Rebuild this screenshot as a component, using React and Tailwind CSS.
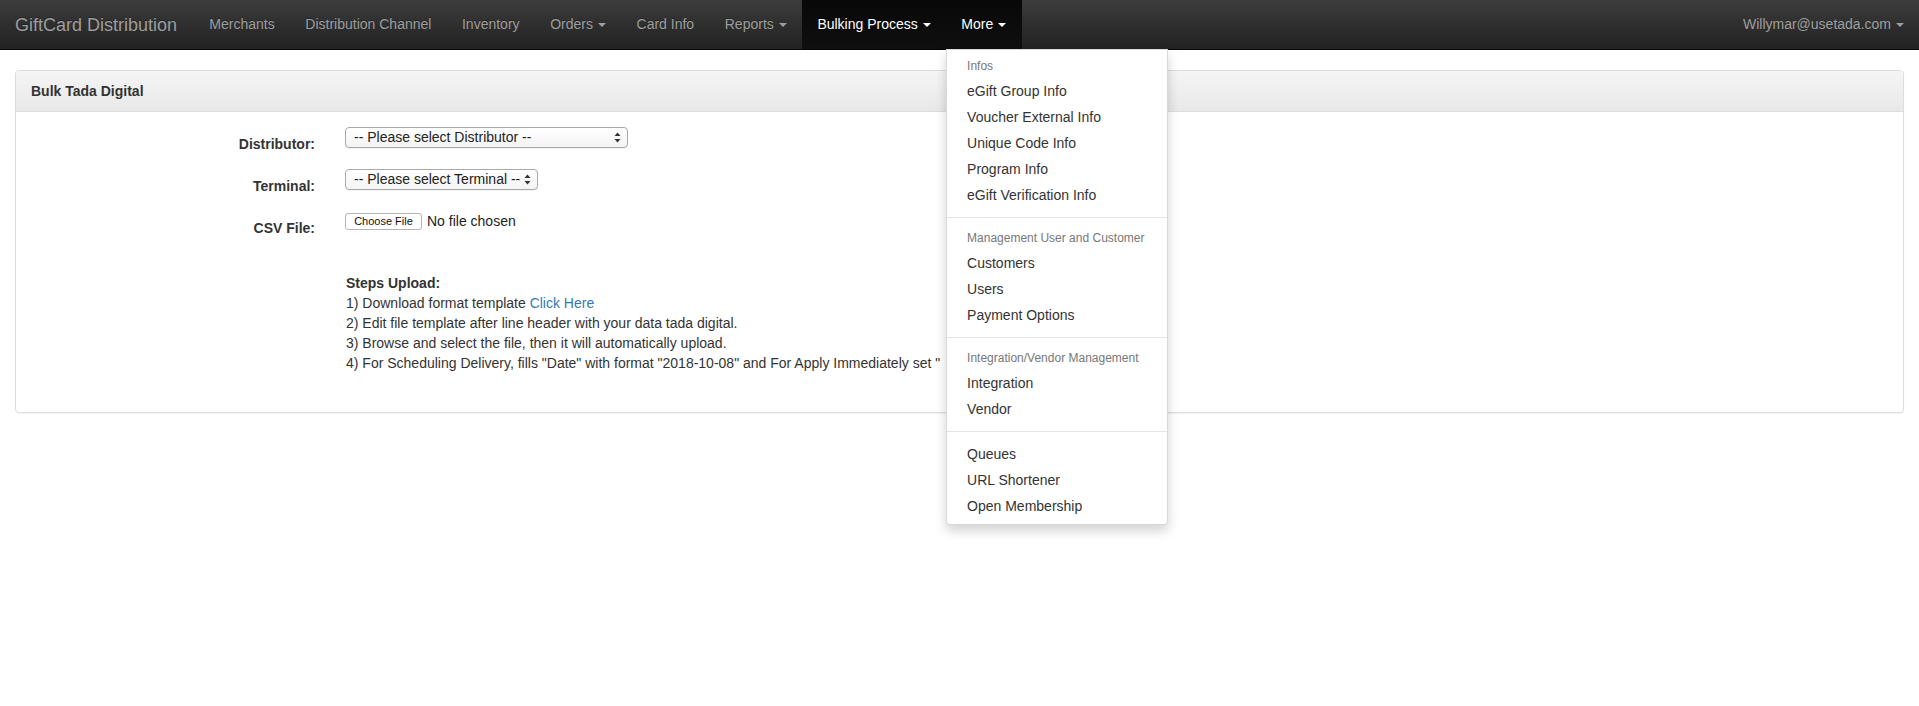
import React from 'react';

const font = { fontFamily: '"Liberation Sans", Arial, sans-serif' };

const Caret = ({ className = '' }) => (
  <span
    className={`ml-[2px] inline-block h-0 w-0 border-x-4 border-t-4 border-x-transparent align-middle ${className}`}
  />
);

const navItems = [
  { label: 'Merchants' },
  { label: 'Distribution Channel' },
  { label: 'Inventory' },
  { label: 'Orders', caret: true },
  { label: 'Card Info' },
  { label: 'Reports', caret: true },
  { label: 'Bulking Process', caret: true, active: true },
  { label: 'More', caret: true, active: true, open: true },
];

const menu = [
  {
    header: 'Infos',
    items: ['eGift Group Info', 'Voucher External Info', 'Unique Code Info', 'Program Info', 'eGift Verification Info'],
  },
  { header: 'Management User and Customer', items: ['Customers', 'Users', 'Payment Options'] },
  { header: 'Integration/Vendor Management', items: ['Integration', 'Vendor'] },
  { items: ['Queues', 'URL Shortener', 'Open Membership'] },
];

const MoreDropdown = () => (
  <ul className="absolute left-0 top-full z-10 w-[222px] rounded-b-[4px] border border-black/15 bg-white py-[5px] text-[14px] shadow-[0_6px_12px_rgba(0,0,0,0.175)]">
    {menu.map((group, gi) => (
      <React.Fragment key={gi}>
        {gi > 0 && <li className="my-[9px] h-px bg-[#e5e5e5]" />}
        {group.header && (
          <li className="px-5 py-[3px] text-[12px] leading-[17px] text-[#777]">{group.header}</li>
        )}
        {group.items.map((item) => (
          <li key={item}>
            <a className="block whitespace-nowrap px-5 py-[3px] leading-[20px] text-[#333]">{item}</a>
          </li>
        ))}
      </React.Fragment>
    ))}
  </ul>
);

const Navbar = () => (
  <nav className="flex h-[50px] items-stretch justify-between border-b border-[#080808] bg-gradient-to-b from-[#3c3c3c] to-[#222]">
    <div className="flex items-stretch">
      <a className="py-[15px] pl-[15px] pr-[17px] text-[18px] leading-[20px] text-[#9d9d9d] [text-shadow:0_-1px_0_rgba(0,0,0,0.25)]">
        GiftCard Distribution
      </a>
      <ul className="flex items-stretch">
        {navItems.map((item) => (
          <li
            key={item.label}
            className={`relative ${item.active ? 'bg-gradient-to-b from-[#080808] to-[#0f0f0f]' : ''}`}
          >
            <a
              className={`block whitespace-nowrap px-[15.3px] py-[15px] text-[14px] leading-[19px] [text-shadow:0_-1px_0_rgba(0,0,0,0.25)] ${
                item.active ? 'text-white' : 'text-[#9d9d9d]'
              }`}
            >
              {item.label}
              {item.caret && <Caret className="ml-[5px]" />}
            </a>
            {item.open && <MoreDropdown />}
          </li>
        ))}
      </ul>
    </div>
    <a className="px-[15px] py-[15px] text-[14px] leading-[19px] text-[#9d9d9d]">
      Willymar@usetada.com
      <Caret className="ml-[5px]" />
    </a>
  </nav>
);

const SelectBox = ({ label, width }) => (
  <div
    className={`flex h-[21px] items-center justify-between rounded-[4px] border border-[#a9a9a9] bg-gradient-to-b from-white to-[#f4f4f4] pl-[8px] pr-[6px] text-[14px] text-[#222] shadow-[0_1px_0_rgba(0,0,0,0.05)] ${width}`}
  >
    <span className="whitespace-nowrap">{label}</span>
    <svg width="7" height="11" viewBox="0 0 7 11" className="ml-[4px] shrink-0">
      <path d="M3.5 0.5 L6.5 4 L0.5 4 Z" fill="#333" />
      <path d="M3.5 10.5 L6.5 7 L0.5 7 Z" fill="#333" />
    </svg>
  </div>
);

const FormRow = ({ label, children }) => (
  <div className="mb-[15px] flex">
    <label className="w-[314px] shrink-0 pr-[15px] pt-[7px] text-right text-[14px] font-bold leading-[20px] text-[#333]">
      {label}
    </label>
    <div className="pl-[15px]">{children}</div>
  </div>
);

export default function App() {
  return (
    <div className="min-h-[706px] bg-white text-[#333]" style={font}>
      <Navbar />
      <div className="px-[15px] pt-[20px]">
        <div className="rounded-[4px] border border-[#ddd] bg-white shadow-[0_1px_2px_rgba(0,0,0,0.05)]">
          <div className="rounded-t-[3px] border-b border-[#ddd] bg-gradient-to-b from-[#f5f5f5] to-[#e8e8e8] px-[15px] py-[10px] text-[14px] font-bold leading-[20px] text-[#333]">
            Bulk Tada Digital
          </div>
          <div className="px-0 pb-[39px] pt-[15px]">
            <FormRow label="Distributor:">
              <SelectBox label="-- Please select Distributor --" width="w-[283px]" />
            </FormRow>
            <FormRow label="Terminal:">
              <SelectBox label="-- Please select Terminal --" width="w-[193px]" />
            </FormRow>
            <FormRow label="CSV File:">
              <div className="flex items-start pt-[2px]">
                <span className="flex h-[17px] w-[77px] items-center justify-center rounded-[3px] border border-[#b5b5b5] bg-white text-[11px] text-[#111]">
                  Choose File
                </span>
                <span className="ml-[5px] -mt-[2px] text-[14px] leading-[20px] text-[#222]">No file chosen</span>
              </div>
            </FormRow>
            <div className="mt-[35px] pl-[330px] text-[14px] leading-[20px] text-[#333]">
              <p className="font-bold">Steps Upload:</p>
              <p>
                1) Download format template <a className="text-[#337ab7]">Click Here</a>
              </p>
              <p>2) Edit file template after line header with your data tada digital.</p>
              <p>3) Browse and select the file, then it will automatically upload.</p>
              <p className="whitespace-nowrap">
                4) For Scheduling Delivery, fills "Date" with format "2018-10-08" and For Apply Immediately set "
              </p>
            </div>
          </div>
        </div>
      </div>
    </div>
  );
}
